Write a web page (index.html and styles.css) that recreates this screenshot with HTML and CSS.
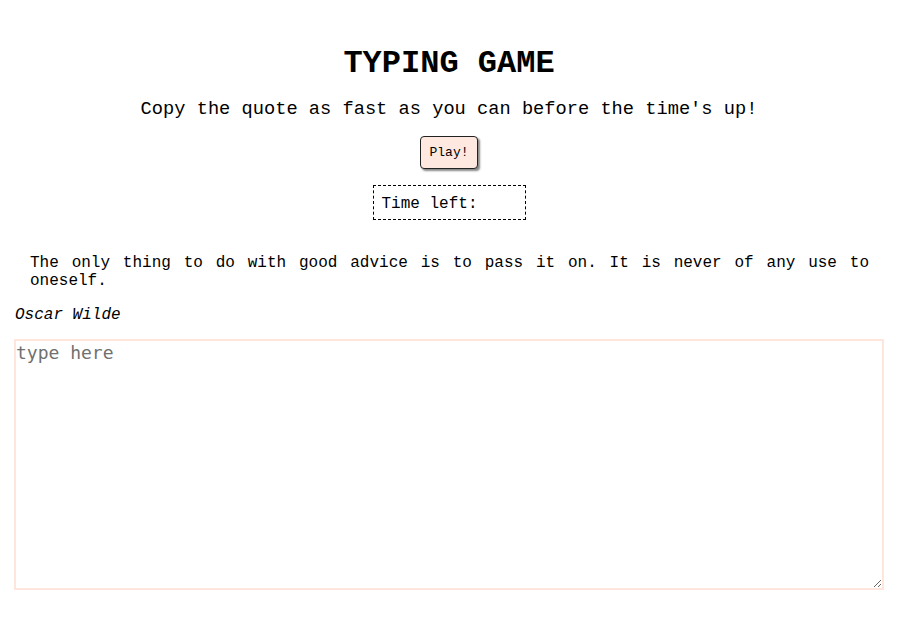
FILE: index.html
```html
<!DOCTYPE html>
<html>
<head>
<meta charset="utf-8">
<title>Typing Game</title>
<link rel="stylesheet" href="styles.css">
</head>
<body>
<div class="page">
  <h1 class="title">TYPING GAME</h1>
  <p class="subtitle">Copy the quote as fast as you can before the time's up!</p>
  <div class="controls">
    <button class="play">Play!</button>
    <div class="timer">Time left: <span class="time"></span></div>
  </div>
  <p class="quote">The only thing to do with good advice is to pass it on. It is never of any use to oneself.</p>
  <p class="author">Oscar Wilde</p>
  <textarea class="input" placeholder="type here"></textarea>
</div>
</body>
</html>
```
FILE: styles.css
```css
html, body {
  margin: 0;
  padding: 0;
  background: #ffffff;
}
body {
  font-family: "Liberation Mono", "Courier New", monospace;
  color: #000;
}
.page {
  padding: 0 14px;
  display: flex;
  flex-direction: column;
}
.title {
  font-size: 32px;
  font-weight: bold;
  text-align: center;
  margin: 45px 0 0;
  line-height: 38px;
}
.subtitle {
  font-size: 18.7px;
  text-align: center;
  margin: 15px 0 0;
  line-height: 22px;
}
.controls {
  display: flex;
  flex-direction: column;
  align-items: center;
  gap: 16px;
  margin-top: 16px;
}
.play {
  font-family: "Liberation Mono", "Courier New", monospace;
  font-size: 13px;
  background: #ffe8e0;
  border: 1px solid #222;
  border-radius: 4px;
  box-shadow: 2px 2px 2px #888;
  width: 58px;
  height: 33px;
  padding: 0;
  color: #000;
}
.timer {
  border: 1px dashed #000;
  width: 135px;
  height: 31px;
  padding: 2px 8px 0;
  font-size: 16px;
  line-height: 33px;
}
.quote {
  font-size: 16px;
  line-height: 18px;
  text-align: justify;
  margin: 34px 0 0;
  padding: 0 15px 0 16px;
}
.author {
  font-style: italic;
  font-size: 16px;
  margin: 16px 0 0;
  line-height: 18px;
  padding-left: 1px;
}
.input {
  margin-top: 15px;
  height: 251px;
  box-sizing: border-box;
  border: 2px solid #ffe6dc;
  font-family: "DejaVu Sans Mono", monospace;
  font-size: 18px;
  padding: 1px 0;
  resize: both;
  outline: none;
}
.input::placeholder {
  color: #707070;
}
```
